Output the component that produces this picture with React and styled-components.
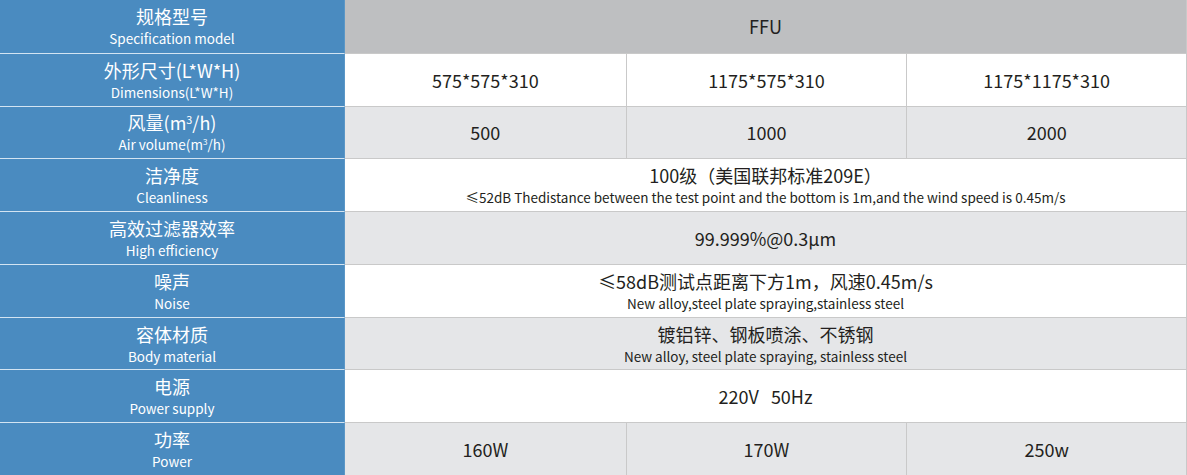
import React from "react";
import styled, { createGlobalStyle } from "styled-components";

const Global = createGlobalStyle`
  html, body { margin: 0; padding: 0; background: #ffffff; }
  body { font-family: "Noto Sans CJK SC", "Noto Sans", sans-serif; }
`;

const Table = styled.div`
  width: 1187px;
  height: 475px;
  display: flex;
  flex-direction: column;
`;

const Row = styled.div`
  flex: 1;
  display: grid;
  grid-template-columns: 345px repeat(3, 1fr);
  min-height: 0;
`;

const LabelCell = styled.div`
  background: #4a8bc0;
  color: #ffffff;
  display: flex;
  flex-direction: column;
  align-items: center;
  justify-content: center;
  gap: 4px;
  border-top: ${(p) => (p.$first ? "none" : "1px solid #d3e4f2")};
  border-right: 1px solid #5b97c7;
`;

const LabelZh = styled.div`
  font-size: 18px;
  line-height: 20px;
`;

const LabelEn = styled.div`
  font-size: 13.5px;
  line-height: 16px;
`;

const bgFor = (tone) =>
  tone === "head" ? "#bebfc1" : tone === "gray" ? "#e5e6e8" : "#ffffff";

const ValueCell = styled.div`
  grid-column: span ${(p) => p.$span || 1};
  background: ${(p) => bgFor(p.$tone)};
  color: #231f20;
  display: flex;
  flex-direction: column;
  align-items: center;
  justify-content: center;
  gap: 4px;
  border-top: ${(p) => (p.$first ? "none" : "1px solid #c9c9c9")};
  border-left: ${(p) => (p.$divider ? "1px solid #c9c9c9" : "none")};
  border-right: ${(p) => (p.$last ? "1px solid #c9c9c9" : "none")};
`;

const Main = styled.div`
  font-size: 18px;
  line-height: 20px;
  white-space: pre;
`;

const Sub = styled.div`
  font-size: 13.5px;
  line-height: 16px;
  white-space: pre;
`;

const Sup = styled.sup`
  font-size: 0.6em;
  vertical-align: 0.6em;
  line-height: 0;
`;

const rows = [
  { zh: "规格型号", en: "Specification model", tone: "head", cells: [{ main: "FFU", span: 3 }] },
  { zh: "外形尺寸(L*W*H)", en: "Dimensions(L*W*H)", tone: "white", cells: [{ main: "575*575*310" }, { main: "1175*575*310" }, { main: "1175*1175*310" }] },
  {
    zh: <>风量(m<Sup>3</Sup>/h)</>,
    en: <>Air volume(m<Sup>3</Sup>/h)</>,
    tone: "gray",
    cells: [{ main: "500" }, { main: "1000" }, { main: "2000" }],
  },
  {
    zh: "洁净度", en: "Cleanliness", tone: "white",
    cells: [{ main: "100级（美国联邦标准209E）", sub: "≤52dB Thedistance between the test point and the bottom is 1m,and the wind speed is 0.45m/s", span: 3 }],
  },
  { zh: "高效过滤器效率", en: "High efficiency", tone: "gray", cells: [{ main: "99.999%@0.3μm", span: 3 }] },
  {
    zh: "噪声", en: "Noise", tone: "white",
    cells: [{ main: "≤58dB测试点距离下方1m，风速0.45m/s", sub: "New alloy,steel plate spraying,stainless steel", span: 3 }],
  },
  {
    zh: "容体材质", en: "Body material", tone: "gray",
    cells: [{ main: "镀铝锌、钢板喷涂、不锈钢", sub: "New alloy, steel plate spraying, stainless steel", span: 3 }],
  },
  { zh: "电源", en: "Power supply", tone: "white", cells: [{ main: "220V   50Hz", span: 3 }] },
  { zh: "功率", en: "Power", tone: "gray", cells: [{ main: "160W" }, { main: "170W" }, { main: "250w" }] },
];

export default function App() {
  return (
    <>
      <Global />
      <Table>
        {rows.map((r, i) => (
          <Row key={i}>
            <LabelCell $first={i === 0}>
              <LabelZh>{r.zh}</LabelZh>
              <LabelEn>{r.en}</LabelEn>
            </LabelCell>
            {r.cells.map((c, j) => (
              <ValueCell
                key={j}
                $span={c.span}
                $tone={r.tone}
                $first={i === 0}
                $divider={j > 0}
                $last={j === r.cells.length - 1}
              >
                <Main>{c.main}</Main>
                {c.sub && <Sub>{c.sub}</Sub>}
              </ValueCell>
            ))}
          </Row>
        ))}
      </Table>
    </>
  );
}
